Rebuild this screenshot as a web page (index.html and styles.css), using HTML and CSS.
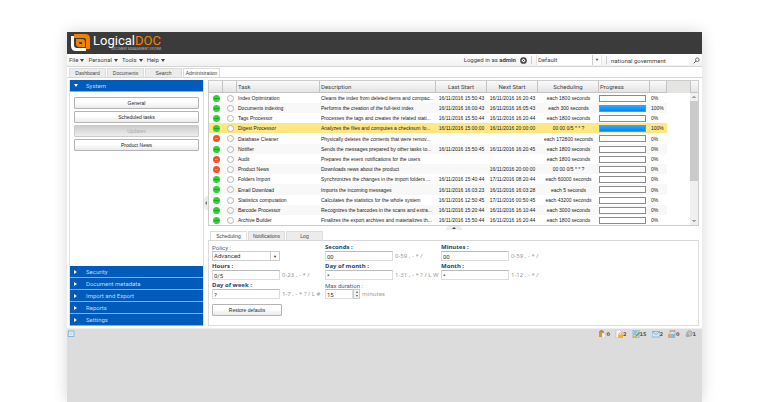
FILE: index.html
```html
<!DOCTYPE html>
<html lang="en">
<head>
  <meta charset="UTF-8">
  <title>LogicalDOC - Administration</title>
  <meta name="viewport" content="width=device-width, initial-scale=1.0">
  <link rel="stylesheet" href="styles.css">
</head>
<body>
  <div class="app">
    <header class="banner">
      <svg class="logo" viewBox="0 0 19 17" aria-hidden="true">
        <path d="M3 0h11q5 0 5 5v10h-4V6q0-2-2-2H3z" fill="#f58000"/>
        <path d="M0 2h3v9q0 3 3 3h9v3H5q-5 0-5-5z" fill="#fff"/>
        <path d="M5 5h6q3 0 3 3v5H8q-3 0-3-3z" fill="#f58000"/>
        <path d="M8 8h2q1 0 1 1v1H9q-1 0-1-1z" fill="#3b3b3b"/>
      </svg>
      <div class="brand">
        <div class="name">Logical<span>DOC</span></div>
        <div class="tagline">DOCUMENT MANAGEMENT SYSTEM</div>
      </div>
    </header>

    <div class="toolbar">
      <nav class="menu">
        <button>File <i class="down"></i></button>
        <button>Personal <i class="down"></i></button>
        <button>Tools <i class="down"></i></button>
        <button>Help <i class="down"></i></button>
      </nav>
      <div class="session">
        <span class="user">Logged in as <b>admin</b></span>
        <button class="logout" aria-label="Logout">
          <svg viewBox="0 0 7 7"><circle cx="3.5" cy="3.5" r="2.6" fill="#fff" stroke="#444" stroke-width="1.5"/><path d="M2.5 2.5l2 2m0-2l-2 2" stroke="#444" stroke-width=".8"/></svg>
        </button>
        <span class="sep"></span>
        <span class="combo tenant"><select aria-label="Tenant"><option>Default</option></select></span>
        <span class="sep"></span>
        <input class="search" type="text" aria-label="Search" value="national government">
        <button class="find" aria-label="Find">
          <svg viewBox="0 0 7 7" fill="none" stroke="#555"><circle cx="4.3" cy="2.7" r="1.8" stroke-width=".8"/><path d="M3 4L.8 6.3"/></svg>
        </button>
      </div>
    </div>

    <div class="tabs main-tabs">
      <button>Dashboard</button>
      <button>Documents</button>
      <button>Search</button>
      <button class="active">Administration</button>
    </div>

    <div class="content">
      <aside class="sidebar">
        <button class="section"><i class="down"></i>System</button>
        <div class="actions">
          <button class="btn">General</button>
          <button class="btn">Scheduled tasks</button>
          <button class="btn" disabled>Updates</button>
          <button class="btn">Product News</button>
        </div>
        <button class="section"><i class="right"></i>Security</button>
        <button class="section"><i class="right"></i>Document metadata</button>
        <button class="section"><i class="right"></i>Import and Export</button>
        <button class="section"><i class="right"></i>Reports</button>
        <button class="section"><i class="right"></i>Settings</button>
      </aside>
      <div class="splitter"><span><i class="left"></i></span></div>

      <main>
        <div class="grid">
          <table class="tasks">
            <colgroup><col class="c-icon"><col class="c-icon"><col class="c-task"><col><col class="c-date"><col class="c-date"><col class="c-sched"><col class="c-prog"><col class="c-pct"></colgroup>
            <thead>
              <tr><th></th><th></th><th>Task</th><th>Description</th><th class="mid">Last Start</th><th class="mid">Next Start</th><th class="mid">Scheduling</th><th>Progress</th><th></th></tr>
            </thead>
            <tbody>
              <tr><td><i class="face"></i></td><td><i class="gear"></i></td><td>Index Optimization</td><td>Cleans the index from deleted items and compac...</td><td>16/11/2016 15:50:43</td><td>16/11/2016 16:20:43</td><td>each 1800 seconds</td><td><div class="bar"></div></td><td>0%</td></tr>
              <tr><td><i class="face"></i></td><td><i class="gear"></i></td><td>Documents indexing</td><td>Performs the creation of the full-text index</td><td>16/11/2016 16:00:43</td><td>16/11/2016 16:05:43</td><td>each 300 seconds</td><td><div class="bar"><div style="width:100%"></div></div></td><td>100%</td></tr>
              <tr><td><i class="face"></i></td><td><i class="gear"></i></td><td>Tags Processor</td><td>Processes the tags and creates the related stati...</td><td>16/11/2016 15:50:44</td><td>16/11/2016 16:20:44</td><td>each 1800 seconds</td><td><div class="bar"></div></td><td>0%</td></tr>
              <tr class="selected"><td><i class="face"></i></td><td><i class="gear"></i></td><td>Digest Processor</td><td>Analyzes the files and computes a checksum fo...</td><td>16/11/2016 15:00:00</td><td>16/11/2016 20:00:00</td><td>00 00 0/5 * * ?</td><td><div class="bar"><div style="width:100%"></div></div></td><td>100%</td></tr>
              <tr><td><i class="face off"></i></td><td><i class="gear"></i></td><td>Database Cleaner</td><td>Physically deletes the contents that were remov...</td><td></td><td></td><td>each 172800 seconds</td><td><div class="bar"></div></td><td>0%</td></tr>
              <tr><td><i class="face"></i></td><td><i class="gear"></i></td><td>Notifier</td><td>Sends the messages prepared by other tasks to...</td><td>16/11/2016 15:50:45</td><td>16/11/2016 16:20:45</td><td>each 1800 seconds</td><td><div class="bar"></div></td><td>0%</td></tr>
              <tr><td><i class="face off"></i></td><td><i class="gear"></i></td><td>Audit</td><td>Prepares the event notifications for the users</td><td></td><td></td><td>each 1800 seconds</td><td><div class="bar"></div></td><td>0%</td></tr>
              <tr><td><i class="face off"></i></td><td><i class="gear"></i></td><td>Product News</td><td>Downloads news about the product</td><td></td><td>16/11/2016 20:00:00</td><td>00 00 0/5 * * ?</td><td><div class="bar"></div></td><td>0%</td></tr>
              <tr><td><i class="face"></i></td><td><i class="gear"></i></td><td>Folders Import</td><td>Synchronizes the changes in the import folders ...</td><td>16/11/2016 15:40:44</td><td>17/11/2016 08:20:44</td><td>each 60000 seconds</td><td><div class="bar"></div></td><td>0%</td></tr>
              <tr><td><i class="face"></i></td><td><i class="gear"></i></td><td>Email Download</td><td>Imports the incoming messages</td><td>16/11/2016 16:03:23</td><td>16/11/2016 16:03:28</td><td>each 5 seconds</td><td><div class="bar"></div></td><td>0%</td></tr>
              <tr><td><i class="face"></i></td><td><i class="gear"></i></td><td>Statistics computation</td><td>Calculates the statistics for the whole system</td><td>16/11/2016 12:50:45</td><td>17/11/2016 00:50:45</td><td>each 43200 seconds</td><td><div class="bar"></div></td><td>0%</td></tr>
              <tr><td><i class="face"></i></td><td><i class="gear"></i></td><td>Barcode Processor</td><td>Recognizes the barcodes in the scans and extra...</td><td>16/11/2016 15:20:44</td><td>16/11/2016 16:10:44</td><td>each 3000 seconds</td><td><div class="bar"></div></td><td>0%</td></tr>
              <tr><td><i class="face"></i></td><td><i class="gear"></i></td><td>Archive Builder</td><td>Finalizes the export archives and materializes th...</td><td>16/11/2016 15:50:44</td><td>16/11/2016 16:20:44</td><td>each 1800 seconds</td><td><div class="bar"></div></td><td>0%</td></tr>
            </tbody>
          </table>
          <div class="filler"></div>
          <div class="scroll">
            <div class="corner"></div>
            <svg viewBox="0 0 8 8"><path d="M2.5 5L4 3.500l1.500 1.500" fill="none" stroke="#555"/></svg>
            <div class="thumb"></div>
            <svg viewBox="0 0 8 8"><path d="M2.500 3L4 4.500l1.500-1.500" fill="none" stroke="#555"/></svg>
          </div>
        </div>
        <div class="hsplit"><span><i class="up"></i></span></div>

        <div class="tabs sub-tabs">
          <button class="active">Scheduling</button>
          <button>Notifications</button>
          <button>Log</button>
        </div>
        <form class="panel">
          <div class="fields">
            <div class="field">
              <label for="policy">Policy :</label>
              <div class="row"><span class="combo policy"><select id="policy"><option>Advanced</option></select></span></div>
            </div>
            <div class="field">
              <label class="req" for="seconds">Seconds :</label>
              <div class="row"><input id="seconds" type="text" value="00"><span class="hint">0-59 , - * /</span></div>
            </div>
            <div class="field">
              <label class="req" for="minutes">Minutes :</label>
              <div class="row"><input id="minutes" type="text" value="00"><span class="hint">0-59 , - * /</span></div>
            </div>
            <div class="field">
              <label class="req" for="hours">Hours :</label>
              <div class="row"><input id="hours" type="text" value="0/5"><span class="hint">0-23 , - * /</span></div>
            </div>
            <div class="field">
              <label class="req" for="dom">Day of month :</label>
              <div class="row"><input id="dom" type="text" value="*"><span class="hint">1-31 , - * ? / L W</span></div>
            </div>
            <div class="field">
              <label class="req" for="month">Month :</label>
              <div class="row"><input id="month" type="text" value="*"><span class="hint">1-12 , - * /</span></div>
            </div>
            <div class="field">
              <label class="req" for="dow">Day of week :</label>
              <div class="row"><input id="dow" type="text" value="?"><span class="hint">1-7 , - * ? / L #</span></div>
            </div>
            <div class="field">
              <label for="max">Max duration :</label>
              <div class="row"><input id="max" class="short" type="number" value="15"><span class="spin"><i class="up"></i><i class="down"></i></span><span class="hint">minutes</span></div>
            </div>
          </div>
          <button type="button" class="btn restore">Restore defaults</button>
        </form>
      </main>
    </div>

    <footer class="status">
      <svg viewBox="0 0 8 8"><path d="M1.500 1h5.500v5.500H1z" fill="#e4f2fb" stroke="#6fa9cf" stroke-width=".8"/><path d="M2.500 3h3M2.500 4.500h3" stroke="#a8cde6" stroke-width=".7"/></svg>
      <div class="counters">
        <span><svg viewBox="0 0 8 8"><path d="M0 1h5v6H0z" fill="#d5953a"/><path d="M1.500 0h2v1.500h-2z" fill="#777"/><path d="M3 3h3v5H3z" fill="#f6f6f6" stroke="#aaa" stroke-width=".4"/></svg>0</span>
        <span><svg viewBox="0 0 8 8"><path d="M1 0h4l2 2v6H1z" fill="#f7f7f7" stroke="#aaa" stroke-width=".5"/><path d="M3 4.500h5V8H3z" fill="#efb42e"/><path d="M4 4.500V3.500q1.500-1.500 3 0v1" fill="none" stroke="#c8922a" stroke-width=".7"/></svg>2</span>
        <span><svg viewBox="0 0 8 8"><path d="M1 0h6v8H1z" fill="#b9dcf2" stroke="#5f9dc6" stroke-width=".6"/><path d="M2 2h3M2 4h2" stroke="#4a86b0" stroke-width=".7"/><path d="M3 7l1-2 3-3 1 1-3 3z" fill="#6f9a52"/><path d="M1 6h4v2H1z" fill="#e2b04a"/></svg>15</span>
        <span><svg viewBox="0 0 8 8"><path d="M0 1.500h8v5.500H0z" fill="#cfe8f8" stroke="#62a6d4" stroke-width=".7"/><path d="M0 1.500l4 3 4-3" fill="none" stroke="#62a6d4" stroke-width=".7"/></svg>2</span>
        <span><svg viewBox="0 0 8 8"><path d="M2 0h5v6H2z" fill="#cde4f2" stroke="#83b0cd" stroke-width=".6"/><path d="M2 1h5" stroke="#dc7658"/><path d="M0 4h4v4H0z" fill="#d9a77c"/><path d="M4 4h3v4H4z" fill="#86b9dc"/></svg>0</span>
        <span><svg viewBox="0 0 8 8"><circle cx="4.500" cy="3.500" r="2.800" fill="#bbb" stroke="#999" stroke-dasharray="1 .6"/><circle cx="2.500" cy="5.500" r="1.800" fill="#aaa"/><circle cx="4.500" cy="3.500" r="1" fill="#ccc"/></svg>1</span>
      </div>
    </footer>
  </div>
</body>
</html>
```
FILE: styles.css
```css
* { box-sizing: border-box; }
body { margin: 0; background: #fff; font: 6px/8px Roboto, sans-serif; color: #444; overflow: hidden; }
button, input, select { font: inherit; color: inherit; margin: 0; padding: 0; border: 0; background: none; border-radius: 0; outline: 0; }
button { cursor: pointer; }
svg { display: block; flex: none; }

/* small arrows */
.down, .up, .left, .right { display: inline-block; border: 2px solid transparent; }
.down { border-top: 3px solid; border-bottom: 0; }
.up { border-bottom: 2px solid; border-top: 0; }
.left { border-right: 2px solid; border-left: 0; }
.right { border-left: 3px solid; border-right: 0; }

.app {
  margin: 32px 66px 0 67px; min-height: calc(100vh - 32px);
  background: #dcdcdc; box-shadow: 0 0 14px rgba(0,0,0,0.16);
}
.banner { display: flex; background: #3b3b3b; height: 22px; padding: 2px 4px; gap: 3px; }
.logo { width: 19px; height: 17px; }
.brand { color: #fff; }
.name { font-size: 13px; line-height: 14px; }
.name span { color: #f58000; }
.tagline { font-size: 3px; line-height: 3px; text-align: right; color: #bbb; }

.toolbar {
  display: flex; justify-content: space-between; align-items: center; height: 13px;
  padding: 0 2px; background: linear-gradient(#fff, #f1f1f1); border-bottom: 1px solid #d4d4d4;
}
.menu { display: flex; gap: 4px; }
.menu button { display: flex; align-items: center; gap: 2px; }
.session { display: flex; align-items: center; gap: 4px; }
.session svg { width: 7px; height: 7px; }
.sep { width: 1px; height: 8px; background: #ccc; }
.combo { position: relative; display: flex; height: 10px; background: #fff; }
.combo select { appearance: none; width: 100%; padding-left: 1px; }
.combo::after {
  content: "▼"; position: absolute; right: 0; top: 0; width: 8px; height: 100%;
  border-left: 1px solid #ccc; font-size: 4px; line-height: 9px; text-align: center; pointer-events: none;
}
.tenant { width: 66px; border: 1px solid #e2e2e2; border-width: 0 1px; }
.search { width: 78px; height: 10px; background: #fff; }

.tabs { display: flex; gap: 1px; font: 5px/8px "Liberation Sans", Arial, sans-serif; border-bottom: 1px solid #d8d8d8; }
.tabs button { width: 37px; background: #ececec; border: 1px solid #dcdcdc; border-bottom: 0; }
.tabs .active { background: #fff; }
.main-tabs { background: #fff; padding: 1px 2px 0; }

.content { display: flex; background: #fff; padding: 2px 3px 2px 2px; border-bottom: 1px solid #eee; }
.sidebar { display: flex; flex-direction: column; width: 135px; border: 1px solid #e0e0e0; border-width: 0 1px; }
.section {
  display: flex; align-items: center; gap: 8px; height: 12px; padding: 0 4px; flex: none;
  background: #005bbb; color: #b9dcf5; border-bottom: 1px solid #7ab4d8;
}
.section i { width: 4px; color: #fff; }
.section .right { width: 3px; margin-right: 1px; }
.actions { flex: 1; display: flex; flex-direction: column; gap: 2px; padding: 5px 4px; }
.btn {
  height: 12px; border: 1px solid #b4b4b4; border-radius: 1px; color: #222;
  background: linear-gradient(#fff 40%, #eaeaea); font: 5px/8px "Liberation Sans", Arial, sans-serif;
}
.btn:disabled { color: #aaa; border-color: #ccc; background: linear-gradient(#ccc, #eee); }
.splitter { display: flex; align-items: center; width: 4px; }
.splitter span { display: flex; align-items: center; justify-content: center; width: 4px; height: 14px; background: #ececec; border-radius: 4px 0 0 4px; }
.splitter i { color: #777; }

main { flex: 1; min-width: 0; }
.grid { display: flex; border: 1px solid #ccc; }
.tasks {
  flex: 1; align-self: flex-start; table-layout: fixed; border-collapse: separate; border-spacing: 0; width: 0;
  font: 5px/8px "Liberation Sans", Arial, sans-serif; color: #222;
}
.c-icon { width: 14px; }
.c-task { width: 83px; }
.c-date { width: 51px; }
.c-sched { width: 61px; }
.c-prog { width: 51px; }
.c-pct { width: 17px; }
.tasks th {
  height: 12px; padding: 0 1px; text-align: left; font: 6px/8px Roboto, sans-serif; color: #444;
  background: linear-gradient(#fafafa, #e4e4e4); border-right: 1px solid #c4c4c4; border-bottom: 1px solid #c4c4c4;
}
.tasks th.mid { text-align: center; }
.tasks td { height: 10px; padding: 0 1px; white-space: nowrap; overflow: hidden; }
.tasks tr:nth-child(5n) td { height: 11px; }
.tasks td:nth-child(5), .tasks td:nth-child(6), .tasks td:nth-child(7) { text-align: center; }
.tasks tr:nth-child(even) td { background: #f8f8f8; }
.tasks tr.selected:nth-child(n) td { background: #ffe883; }
.face, .gear { display: block; width: 7px; height: 7px; margin: 0 auto; border-radius: 50%; }
.face { background: linear-gradient(transparent 3px, #1aa824 3px, #1aa824 4px, transparent 4px) center / 5px 7px no-repeat, #2ed234; }
.face.off { background: linear-gradient(transparent 3px, #ff9a7c 3px, #ff9a7c 4px, transparent 4px) center / 3px 7px no-repeat, #f4502a; }
.gear { border: 1px solid #b4b4b4; background: #fff; }
.bar { width: 47px; height: 7px; border: 1px solid #8c8c8c; background: #fff; margin-left: -1px; }
.bar div { height: 100%; background: linear-gradient(#2aa5ff, #0088f0); }

.filler { width: 23px; height: 12px; background: #e4e4e2; }
.scroll { display: flex; flex-direction: column; width: 8px; background: #f0f0f0; }
.scroll svg { width: 8px; height: 8px; }
.scroll svg:last-child { margin-top: auto; }
.corner { height: 12px; background: linear-gradient(#fafafa, #e4e4e4); border: 1px solid #c4c4c4; border-width: 0 0 1px 1px; }
.thumb { height: 80px; background: #cacaca; }
.hsplit { display: flex; justify-content: center; height: 5px; }
.hsplit span { display: flex; align-items: center; justify-content: center; width: 16px; height: 4px; background: #ececec; border-radius: 4px 4px 0 0; }

.sub-tabs { padding-left: 2px; }
.panel { padding: 3px 3px 9px; border: 1px solid #ddd; border-top: 0; }
.fields { display: grid; grid-template-columns: 113px 116px 1fr; row-gap: 2px; }
.field { display: flex; flex-direction: column; color: #333; }
.field label { color: #4a6076; line-height: 7px; }
.field label.req { font-family: "Noto Sans", sans-serif; font-weight: bold; color: #1f4468; }
.row { display: flex; align-items: center; height: 10px; }
.row input { width: 68px; height: 10px; padding-left: 1px; border: 1px solid #ddd; border-top-color: #bbb; }
.row .short { width: 28px; appearance: textfield; }
.row .policy { width: 68px; border: 1px solid #ccc; }
.hint { margin-left: 2px; font-family: "Noto Sans", sans-serif; color: #9a9a9a; white-space: nowrap; }
.spin { display: flex; flex-direction: column; align-items: center; justify-content: center; gap: 2px; width: 7px; height: 10px; border: 1px solid #ccc; background: #f4f4f4; }
.spin i { border-width: 1px; color: #555; }
.spin .up { border-bottom-width: 2px; }
.spin .down { border-top-width: 2px; }
.restore { display: block; width: 70px; margin-top: 5px; }
input::-webkit-inner-spin-button { appearance: none; }

.status { display: flex; justify-content: space-between; padding: 1px 6px 0 0; font: bold 5px/8px "DejaVu Sans", sans-serif; color: #555; }
.status svg { width: 8px; height: 8px; }
.counters { display: flex; gap: 5px; }
.counters span { display: flex; }
```
